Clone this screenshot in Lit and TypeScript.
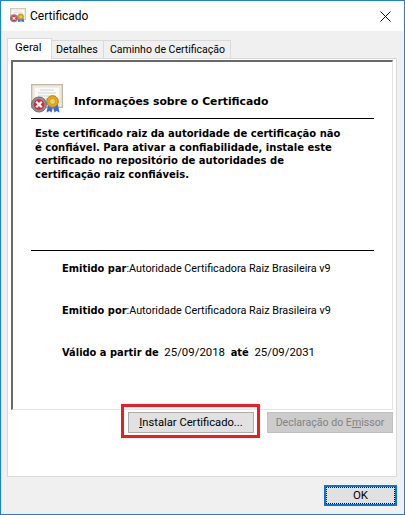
import { LitElement, html, css } from 'lit';
import { customElement } from 'lit/decorators.js';

const certIcon = (size: number) => html`
  <svg width=${size} height=${size} viewBox="0 0 32 32">
    <rect x=".7" y=".7" width="30.6" height="22.6" fill="#f5f2e8" stroke="#c2b9a3" stroke-width="1.4"/>
    <rect x="3" y="3" width="26" height="18" fill="#fbfaf6" stroke="#e6e0cf" stroke-width="1"/>
    <path d="M9 6h14M7 9h18M7 12h18M7 15h18" stroke="#cdd2da" stroke-width="1"/>
    <path d="M17 21l-1.500 7.500 3-1.500 2 1.500 1.500-5 1.500 5 2-1.500 3 1.500-1.500-7.500z" fill="#2f6fe0"/>
    <circle cx="21.500" cy="17.500" r="5.800" fill="#e3a91c" stroke="#b57d10" stroke-width="1"/>
    <circle cx="21.500" cy="17.500" r="3" fill="#f4cf5c" stroke="#c48f1a" stroke-width=".8"/>
    <circle cx="8" cy="20.500" r="7.500" fill="#8f9196" stroke="#6d6f74" stroke-width="1"/>
    <circle cx="8" cy="20.500" r="5.300" fill="#d8293a"/>
    <path d="M5.200 17.700l5.600 5.600M10.800 17.700l-5.600 5.600" stroke="#fff" stroke-width="2.200"/>
  </svg>`;

@customElement('app-root')
export class AppRoot extends LitElement {
    static styles = css`
        :host {
            display: block;
            width: 405px;
            height: 515px;
            font-family: Roboto, 'Noto Sans', sans-serif;
            font-size: 11.5px;
            color: #000;
        }

        .window {
            box-sizing: border-box;
            width: 405px;
            height: 515px;
            border: 1px solid #1883d7;
            background: #f0f0f0;
            display: flex;
            flex-direction: column;
        }

        .title {
            height: 30px;
            flex: none;
            background: #fff;
            display: flex;
            align-items: center;
            padding: 0 13px 0 9px;
            gap: 4px;
            font-size: 12px;
        }

        .title .name { flex: 1; }

        .body {
            flex: 1;
            padding: 7px 7px 0 6px;
            display: flex;
            flex-direction: column;
        }

        .tabs {
            display: flex;
            height: 20px;
            flex: none;
            align-items: flex-end;
            position: relative;
            z-index: 1;
        }

        .tab {
            height: 18px;
            box-sizing: border-box;
            border: 1px solid #d9d9d9;
            border-bottom: none;
            padding: 0 0 0 6px;
            margin-left: -1px;
            line-height: 18px;
            font-size: 10.7px;
            white-space: nowrap;
            background: #f0f0f0;
        }

        .tab.geral {
            width: 45px;
            height: 21px;
            margin-left: 0;
            margin-bottom: -1px;
            padding-left: 7px;
            line-height: 16px;
            font-size: 11.5px;
            background: #fff;
        }

        .tab.detalhes { width: 53px; padding-left: 4px; }

        .tab.caminho { width: 128px; font-size: 10.5px; }

        .panel {
            box-sizing: border-box;
            height: 419px;
            flex: none;
            background: #fff;
            border: 1px solid #d9d9d9;
            padding: 1px 3px 0 3px;
            display: flex;
            flex-direction: column;
        }

        .inner {
            box-sizing: border-box;
            height: 350px;
            flex: none;
            border-top: 2px solid #696969;
            border-left: 2px solid #696969;
            border-right: 1px solid #e3e3e3;
            border-bottom: 1px solid #e3e3e3;
            padding: 22px 18px 0 18px;
        }

        .info-head {
            display: flex;
            align-items: flex-start;
            gap: 11px;
            height: 32px;
        }

        .info-head b {
            font-family: 'DejaVu Sans', sans-serif;
            font-size: 10.8px;
            line-height: 14px;
            padding-top: 11px;
        }

        .rule {
            height: 1px;
            background: #000;
        }

        .head-rule { margin-top: 2px; }

        .warning {
            font-family: 'DejaVu Sans', sans-serif;
            font-weight: bold;
            font-size: 10px;
            line-height: 13.6px;
            margin: 8px 0 0 4px;
            height: 123px;
            width: 312px;
        }

        .details {
            padding: 10px 0 0 31px;
            display: flex;
            flex-direction: column;
            gap: 27px;
            line-height: 14px;
        }

        .details b {
            font-family: 'DejaVu Sans', sans-serif;
            font-size: 9.9px;
        }

        .details span {
            white-space: pre;
            font-size: 10.8px;
        }

        .details .dates span { font-size: 11.4px; }

        .buttons {
            display: flex;
            justify-content: flex-end;
            gap: 13px;
            padding: 2px 0 0 0;
        }

        .btn {
            box-sizing: border-box;
            width: 126px;
            height: 21px;
            border: 1px solid #adadad;
            background: #e1e1e1;
            line-height: 19px;
            font-size: 11.2px;
            text-align: center;
            position: relative;
        }

        .btn.off {
            background: #cccccc;
            border-color: #bfbfbf;
            color: #838383;
            font-size: 10.6px;
        }

        u { text-underline-offset: 1px; }

        .mark {
            position: absolute;
            left: -8px;
            right: -7px;
            top: -9px;
            bottom: -6px;
            border: 3px solid #ed1c24;
        }

        .footer {
            display: flex;
            justify-content: flex-end;
            padding: 8px 0 0 0;
        }

        .ok {
            box-sizing: border-box;
            width: 73px;
            height: 21px;
            border: 2px solid #0078d7;
            background: #e1e1e1;
            text-align: center;
            line-height: 17px;
            outline: 1px dotted #000;
            outline-offset: -3px;
        }
    `;

    render() {
        return html`
        <div class="window">
            <div class="title">
                ${certIcon(16)}
                <span class="name">Certificado</span>
                <svg width="11" height="11" viewBox="0 0 11 11"><path d="M.5.5l10 10M10.500.5l-10 10" stroke="#111" stroke-width="1" fill="none"/></svg>
            </div>
            <div class="body">
                <div class="tabs">
                    <div class="tab geral">Geral</div>
                    <div class="tab detalhes">Detalhes</div>
                    <div class="tab caminho">Caminho de Certificação</div>
                </div>
                <div class="panel">
                    <div class="inner">
                        <div class="info-head">
                            ${certIcon(32)}
                            <b>Informações sobre o Certificado</b>
                        </div>
                        <div class="rule head-rule"></div>
                        <p class="warning">Este certificado raiz da autoridade de certificação não é confiável. Para ativar a confiabilidade, instale este certificado no repositório de autoridades de certificação raiz confiáveis.</p>
                        <div class="rule"></div>
                        <div class="details">
                            <div><b>Emitido par</b><span>:Autoridade Certificadora Raiz Brasileira v9</span></div>
                            <div><b>Emitido por</b><span>:Autoridade Certificadora Raiz Brasileira v9</span></div>
                            <div class="dates"><b>Válido a partir de</b><span>  25/09/2018  </span><b>até</b><span>  25/09/2031</span></div>
                        </div>
                    </div>
                    <div class="buttons">
                        <div class="btn"><u>I</u>nstalar Certificado...<div class="mark"></div></div>
                        <div class="btn off">Declaração do E<u>m</u>issor</div>
                    </div>
                </div>
                <div class="footer">
                    <div class="ok">OK</div>
                </div>
            </div>
        </div>
        `;
    }
}
